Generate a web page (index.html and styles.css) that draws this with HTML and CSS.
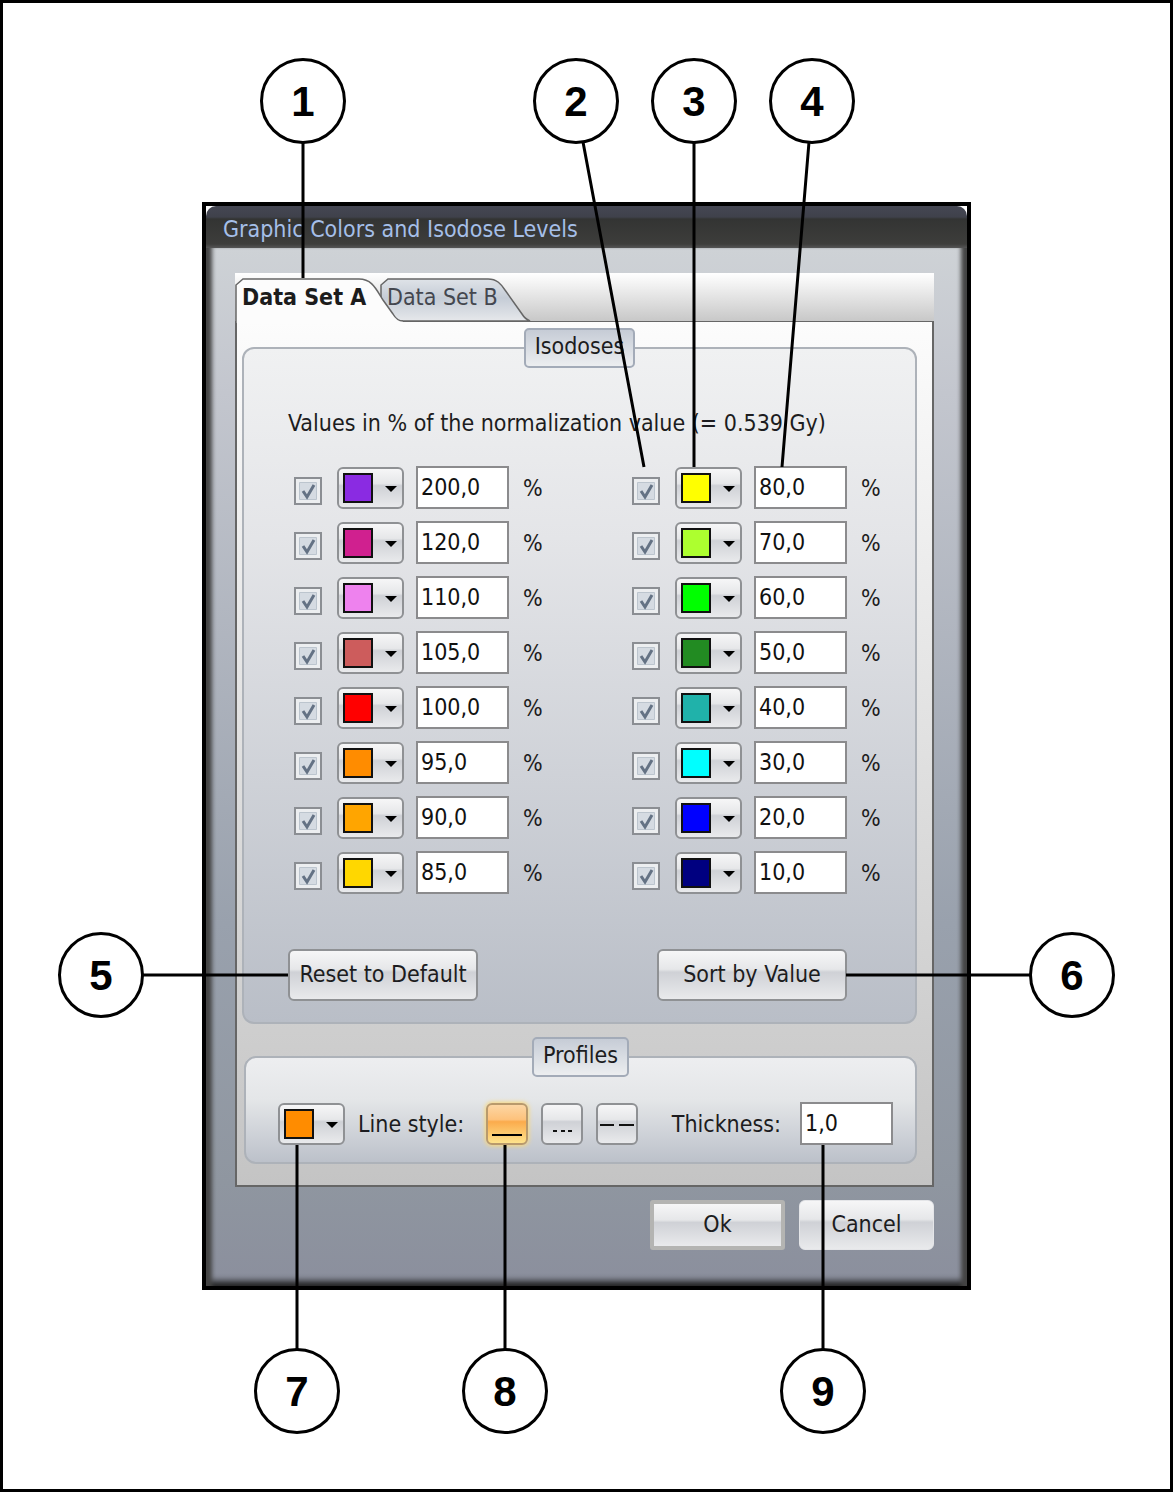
FILE: index.html
```
<!DOCTYPE html>
<html lang="en">
<head>
<meta charset="utf-8">
<meta name="viewport" content="width=device-width, initial-scale=1">
<title>Graphic Colors and Isodose Levels</title>
<link rel="stylesheet" href="styles.css">
</head>
<body>
<main class="sheet">
  <div class="figure">
    <section class="dialog" role="dialog" aria-labelledby="dialog-title">
      <h1 class="titlebar" id="dialog-title">Graphic Colors and Isodose Levels</h1>
      <div class="dialog-body">
        <div class="tabs" role="tablist">
          <svg class="tab-shapes" width="300" height="50" viewBox="0 0 300 50" aria-hidden="true">
            <defs>
              <linearGradient id="tab-b" x1="0" y1="0" x2="0" y2="1">
                <stop offset="0" stop-color="#dfe3e8"/>
                <stop offset="0.45" stop-color="#c5ccd6"/>
                <stop offset="1" stop-color="#e6e8eb"/>
              </linearGradient>
            </defs>
            <path d="M146 48V12L153 6H253C262 6 266 11 270 17L287 41Q290 46 295 48Z" fill="url(#tab-b)" stroke="#666" stroke-width="1.5"/>
            <path d="M1 50V12L8 6H124C137 6 141 16 148 27L158 41Q162 48 168 48V50Z" fill="#fcfcfc"/>
            <path d="M1 50V12L8 6H124C137 6 141 16 148 27L158 41Q162 48 168 48" fill="none" stroke="#666" stroke-width="1.5"/>
          </svg>
          <button class="tab tab-active" type="button" role="tab" aria-selected="true">Data Set A</button>
          <button class="tab" type="button" role="tab" aria-selected="false">Data Set B</button>
        </div>
        <div class="panel" role="tabpanel">
          <fieldset class="group isodoses">
            <legend>Isodoses</legend>
            <p class="note">Values in % of the normalization value (= 0.539 Gy)</p>
            <div class="levels">
              <div class="column" id="levels-high"></div>
              <div class="column" id="levels-low"></div>
            </div>
            <div class="actions">
              <button class="button" type="button">Reset to Default</button>
              <button class="button" type="button">Sort by Value</button>
            </div>
          </fieldset>
          <fieldset class="group profiles">
            <legend>Profiles</legend>
            <div class="profile-row">
              <button class="color-button" type="button" aria-label="Profile color"><span class="swatch" style="background:#ff8c00"></span><span class="arrow"></span></button>
              <span class="style-label" id="style-label">Line style:</span>
              <div class="styles" role="group" aria-labelledby="style-label">
                <button class="style-button selected" type="button" aria-label="Solid" aria-pressed="true"><svg width="38" height="38" viewBox="0 0 38 38"><path d="M4 30H34" stroke="#000" stroke-width="2"/></svg></button>
                <button class="style-button" type="button" aria-label="Dotted" aria-pressed="false"><svg width="38" height="38" viewBox="0 0 38 38"><path d="M10 26H14M18 26H22M25 26H29" stroke="#111" stroke-width="2"/></svg></button>
                <button class="style-button" type="button" aria-label="Dashed" aria-pressed="false"><svg width="38" height="38" viewBox="0 0 38 38"><path d="M2 20H16M21 20H36" stroke="#111" stroke-width="2"/></svg></button>
              </div>
              <label class="thickness-label" for="thickness">Thickness:</label>
              <input class="value" id="thickness" type="text" value="1,0">
            </div>
          </fieldset>
        </div>
        <div class="footer">
          <button class="button default" type="button">Ok</button>
          <button class="button plain" type="button">Cancel</button>
        </div>
      </div>
    </section>
    <svg class="callouts" viewBox="202 202 769 1088">
      <g stroke="#000" stroke-width="3">
        <path d="M303 142V278M583 142L644 467M694 142V467M809 142L782 467M143 975H288M846 975H1030M297 1145V1350M505 1145V1350M823 1145V1350" fill="none"/>
        <g fill="#fff">
          <circle cx="303" cy="101" r="41.5"/>
          <circle cx="576" cy="101" r="41.5"/>
          <circle cx="694" cy="101" r="41.5"/>
          <circle cx="812" cy="101" r="41.5"/>
          <circle cx="101" cy="975" r="41.5"/>
          <circle cx="1072" cy="975" r="41.5"/>
          <circle cx="297" cy="1391" r="41.5"/>
          <circle cx="505" cy="1391" r="41.5"/>
          <circle cx="823" cy="1391" r="41.5"/>
        </g>
      </g>
      <g class="numbers">
        <text x="303" y="116">1</text>
        <text x="576" y="116">2</text>
        <text x="694" y="116">3</text>
        <text x="812" y="116">4</text>
        <text x="101" y="990">5</text>
        <text x="1072" y="990">6</text>
        <text x="297" y="1406">7</text>
        <text x="505" y="1406">8</text>
        <text x="823" y="1406">9</text>
      </g>
    </svg>
  </div>
</main>
<script src="levels.js"></script>
</body>
</html>
```
FILE: levels.js
```
const levels = {
  'levels-high': [
    ['200,0', '#8a2be2'], ['120,0', '#d0208f'], ['110,0', '#ee82ee'], ['105,0', '#cd5c5c'],
    ['100,0', '#ff0000'], ['95,0', '#ff8c00'], ['90,0', '#ffa500'], ['85,0', '#ffd700']
  ],
  'levels-low': [
    ['80,0', '#ffff00'], ['70,0', '#adff2f'], ['60,0', '#00ff00'], ['50,0', '#228b22'],
    ['40,0', '#20b2aa'], ['30,0', '#00ffff'], ['20,0', '#0000ff'], ['10,0', '#000080']
  ]
};

for (const [column, rows] of Object.entries(levels)) {
  document.getElementById(column).innerHTML = rows.map(([value, color], i) => `
    <div class="level">
      <input class="check" type="checkbox" checked aria-label="Show ${value} %">
      <button class="color-button" type="button" aria-label="Color of ${value} %"><span class="swatch" style="background:${color}"></span><span class="arrow"></span></button>
      <input class="value" id="${column}-${i}" type="text" value="${value}">
      <label class="unit" for="${column}-${i}">%</label>
    </div>`).join('');
}
```
FILE: styles.css
```
* {
  box-sizing: border-box;
}

body {
  margin: 0;
  background: #fff;
  color: #1c1c20;
  font-family: "DejaVu Sans Condensed", "DejaVu Sans", sans-serif;
  font-stretch: condensed;
  font-size: 23px;
  line-height: 28px;
}

button,
input {
  margin: 0;
  font: inherit;
  color: inherit;
}

.sheet {
  min-height: 100vh;
  padding: 199px;
  border: 3px solid #000;
}

.figure {
  position: relative;
  max-width: 769px;
  margin: 0 auto;
}

.dialog {
  border: 4px solid #000;
  background: #fff;
}

.titlebar {
  margin: 0;
  padding: 9px 17px 5px;
  border-radius: 10px 10px 0 0;
  background: linear-gradient(#454753 0, #3f414b 11px, #333433 13px, #3d3d3b 38px, #555 42px);
  color: #a5bfe8;
  font-size: 23px;
  font-weight: normal;
  line-height: 28px;
}

.dialog-body {
  padding: 25px 33px 36px 29px;
  background: linear-gradient(#ced2d6 0, #c3c6ce 14%, #99a1ad 65%, #8f96a0 90%, #8b8f9d 100%);
  box-shadow: inset 9px 0 4px -3px #444, inset -9px 0 4px -3px #444, inset 0 -8px 6px -3px #222;
}

.tabs {
  position: relative;
  display: flex;
  height: 48px;
  padding: 5px 4px 0 7px;
  gap: 15px;
  background: linear-gradient(#fff, #c8c8c8);
}

.tab-shapes {
  position: absolute;
  top: 0;
  left: 0;
}

.tab {
  position: relative;
  height: 38px;
  padding: 0;
  border: 0;
  background: none;
  color: #44474f;
}

.tab-active {
  width: 130px;
  color: #1c1c1c;
  font-weight: bold;
  text-align: left;
}

.panel {
  padding: 6px 15px 21px 5px;
  border: 2px solid #666;
  border-top-width: 1px;
  background: linear-gradient(#fcfcfc, #c4c4c4);
}

.group {
  min-width: 0;
  margin: 0;
  border: 2px solid #adb2b9;
  border-radius: 12px;
}

.group legend {
  height: 40px;
  margin: 0 auto;
  padding: 2px 9px;
  border: 2px solid #a3abb8;
  border-radius: 5px;
  background: linear-gradient(#c6ccd6, #eceef0);
}

.isodoses {
  padding: 41px 32px 21px;
  background: linear-gradient(#f0f1f2, #e4e5e8 28%, #b9bec7);
}

.profiles {
  margin: 13px 0 0 2px;
  padding: 25px 22px 17px;
  background: linear-gradient(#edeef0, #e4e6e8 40%, #bcc1ca);
}

.note {
  margin: 0 0 29px 12px;
}

.levels {
  display: flex;
  justify-content: space-between;
  padding-left: 18px;
}

.column {
  display: grid;
  gap: 12px;
}

.level {
  display: flex;
  align-items: center;
}

.check {
  appearance: none;
  width: 28px;
  height: 28px;
  margin: 7px 15px 0 0;
  border: 2px solid #8b8e93;
  background: #eceef0 url("data:image/svg+xml,%3Csvg xmlns='http://www.w3.org/2000/svg' viewBox='0 0 24 24'%3E%3Cpath d='M3.5 3.5h17v17h-17z' fill='%23d5dbe2' stroke='%23bcc5ce'/%3E%3C/svg%3E");
}

.check:checked {
  background-image: url("data:image/svg+xml,%3Csvg xmlns='http://www.w3.org/2000/svg' viewBox='0 0 24 24'%3E%3Cpath d='M3.5 3.5h17v17h-17z' fill='%23d5dbe2' stroke='%23bcc5ce'/%3E%3Cpath d='M7 12l4 6L18 6' fill='none' stroke='%23647284' stroke-width='3'/%3E%3C/svg%3E");
}

.color-button,
.style-button,
.button {
  border: 2px solid #8f9194;
  border-radius: 6px;
  background: linear-gradient(#f6f6f7, #e6e7e9 38%, #cfd1d6 44%, #e9eaec);
}

.color-button {
  display: flex;
  align-items: center;
  width: 67px;
  height: 42px;
  padding: 0 0 0 4px;
}

.swatch {
  width: 30px;
  height: 30px;
  border: 2px solid #111;
}

.arrow {
  margin: 2px 0 0 12px;
  border: 6px solid transparent;
  border-top-color: #000;
  border-bottom: 0;
}

.value {
  width: 93px;
  height: 43px;
  padding: 0 3px 2px;
  border: 2px solid #8b8b8d;
  background: #fff;
  color: #111;
}

.level .value {
  margin: 0 14px 0 12px;
}

.unit {
  width: 22px;
}

.actions {
  display: flex;
  justify-content: space-between;
  padding: 55px 36px 0 12px;
}

.button {
  width: 190px;
  height: 52px;
  padding: 0 0 2px;
  white-space: nowrap;
}

.profile-row {
  display: flex;
  align-items: center;
  padding-left: 10px;
}

.style-label {
  min-width: 128px;
  margin-left: 13px;
}

.styles {
  display: flex;
  gap: 13px;
}

.style-button {
  width: 42px;
  height: 42px;
  padding: 0;
}

.style-button svg {
  display: block;
}

.selected {
  border-color: #b99a6c;
  background: linear-gradient(#fcd6a4, #fdc27c 38%, #fbab4c 44%, #fee38c);
  box-shadow: 0 0 4px 1px #fbd878;
}

.thickness-label {
  margin: 0 19px 0 auto;
}

.footer {
  display: flex;
  justify-content: flex-end;
  gap: 14px;
  padding-top: 13px;
}

.footer .button {
  width: 135px;
  height: 50px;
}

.footer .default {
  border: 4px solid #b4b4b2;
  border-radius: 3px;
}

.footer .plain {
  border: 1px solid #e4e5e8;
}

.callouts {
  position: absolute;
  inset: 0;
  width: 100%;
  height: 100%;
  overflow: visible;
  pointer-events: none;
}

.numbers {
  font-family: "Liberation Sans", Arial, sans-serif;
  font-size: 42px;
  font-weight: bold;
  text-anchor: middle;
}
```
